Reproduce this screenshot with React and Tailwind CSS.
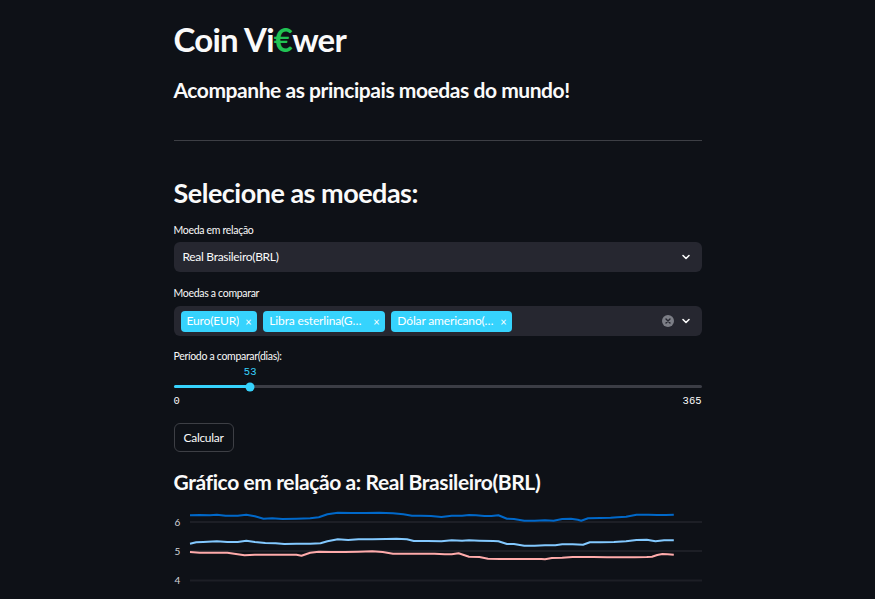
import React from "react";

const DARK = [[72,43],[100,42],[130,43],[150,41],[175,44],[210,44],[235,41],[260,46],[285,53],[310,52],[340,54],[380,53],[420,52],[445,49],[470,40],[500,35],[540,36],[580,36],[620,35],[660,37],[690,40],[715,44],[740,44],[770,45],[800,48],[830,44],[860,44],[880,42],[900,43],[925,45],[945,45],[965,43],[990,53],[1010,54],[1040,59],[1070,59],[1100,58],[1125,59],[1150,54],[1175,53],[1195,56],[1205,59],[1225,52],[1260,51],[1290,50],[1310,49],[1335,47],[1365,41],[1400,41],[1425,42],[1450,42],[1473,41]];
const LIGHT = [[72,128],[90,124],[110,123],[150,121],[180,123],[210,123],[235,119],[260,123],[290,126],[320,127],[345,129],[380,128],[420,128],[450,127],[470,121],[500,115],[530,117],[560,115],[600,115],[640,114],[670,113],[700,115],[720,120],[760,120],[800,121],[830,118],[860,119],[880,118],[910,119],[950,120],[965,121],[990,129],[1010,129],[1040,134],[1070,134],[1100,133],[1130,133],[1150,130],[1180,130],[1210,131],[1230,124],[1260,124],[1300,123],[1335,121],[1365,117],[1395,116],[1420,121],[1445,118],[1473,118]];
const PINK = [[72,153],[100,155],[140,155],[180,155],[200,158],[230,163],[260,161],[300,161],[340,161],[380,161],[395,164],[420,155],[445,152],[480,153],[520,153],[560,152],[600,151],[630,153],[660,158],[700,158],[740,158],[780,158],[810,160],[830,160],[850,157],[880,167],[910,168],[935,173],[970,174],[1010,174],[1050,174],[1090,174],[1100,175],[1120,171],[1150,170],[1180,168],[1210,168],[1240,168],[1280,169],[1320,169],[1360,169],[1395,168],[1410,167],[1425,162],[1440,159],[1455,160],[1473,161]];

const toPts = (arr) =>
  arr.map(([zx, zy]) => `${(16 + (zx - 72) / 2.896).toFixed(1)},${(zy / 3).toFixed(1)}`).join(" ");

const SANS = "font-['Lato','Liberation_Sans',sans-serif]";

function Chevron() {
  return (
    <svg width="10" height="10" viewBox="0 0 10 10" fill="none">
      <path d="M2 3.5 L5 6.5 L8 3.5" stroke="#fafafa" strokeWidth="1.6" strokeLinecap="round" strokeLinejoin="round" />
    </svg>
  );
}

function Tag({ children, w }) {
  return (
    <div className={`flex items-center h-[21px] rounded-[4px] bg-[#36d3fd] pl-[6px] pr-[6px] text-white text-[12px] tracking-[-0.15px] ${w}`}>
      <span className="truncate min-w-0 flex-1">{children}</span>
      <span className="ml-[6px] text-[11px] leading-none">×</span>
    </div>
  );
}

export default function App() {
  const value = 53;
  const pct = (value / 365) * 100;
  return (
    <div className={`w-full h-[599px] overflow-hidden bg-[#0e1117] text-[#fafafa] ${SANS}`}>
      <div className="mx-auto w-[528px] flex flex-col pt-[19px]">
        <h1 className="text-[33px] font-bold leading-[40px] tracking-[-0.75px]">
          Coin Vi<span className="text-[#21c354]">€</span>wer
        </h1>
        <h3 className="mt-[17px] text-[21px] font-bold leading-[28px] tracking-[-0.45px]">Acompanhe as principais moedas do mundo!</h3>
        <div className="mt-[36px] h-px bg-[#3d3f45]" />
        <h2 className="mt-[35px] text-[27px] font-bold leading-[34px] tracking-[-0.5px]">Selecione as moedas:</h2>

        <label className="mt-[13px] text-[10.5px] leading-[14px] tracking-[-0.3px]">Moeda em relação</label>
        <div className="mt-[5px] h-[30px] rounded-[6px] bg-[#262730] flex items-center pl-[9px] pr-[11px] text-[12px] tracking-[-0.3px]">
          <span className="flex-1">Real Brasileiro(BRL)</span>
          <Chevron />
        </div>

        <label className="mt-[14px] text-[10.5px] leading-[14px] tracking-[-0.3px]">Moedas a comparar</label>
        <div className="mt-[6px] h-[30px] rounded-[6px] bg-[#262730] flex items-center pl-[7px] pr-[11px]">
          <div className="flex-1 flex items-center gap-[6px]">
            <Tag w="w-auto">Euro(EUR)</Tag>
            <Tag w="w-[122px]">Libra esterlina(GBP)</Tag>
            <Tag w="w-[121px]">Dólar americano(USD)</Tag>
          </div>
          <div className="w-[12px] h-[12px] rounded-full bg-[#7c7e86] flex items-center justify-center mr-[7px]">
            <svg width="6" height="6" viewBox="0 0 6 6">
              <path d="M1 1 L5 5 M5 1 L1 5" stroke="#262730" strokeWidth="1.4" strokeLinecap="round" />
            </svg>
          </div>
          <Chevron />
        </div>

        <label className="mt-[13px] text-[10.5px] leading-[14px] tracking-[-0.3px]">Período a comparar(dias):</label>
        <div className="mt-[2px] relative h-[14px] font-['Liberation_Mono',monospace] text-[10.5px] leading-[14px] text-[#36d3fd]">
          <span className="absolute -translate-x-1/2" style={{ left: `${pct}%` }}>{value}</span>
        </div>
        <div className="relative h-[15px] flex items-center">
          <div className="w-full h-[3px] rounded-full bg-[#3b3d45]">
            <div className="h-full rounded-full bg-[#36d3fd]" style={{ width: `${pct}%` }} />
          </div>
          <div
            className="absolute top-1/2 w-[9px] h-[9px] rounded-full bg-[#36d3fd] -translate-x-1/2 -translate-y-1/2"
            style={{ left: `${pct}%` }}
          />
        </div>
        <div className="flex justify-between font-['Liberation_Mono',monospace] text-[10.5px] leading-[14px]">
          <span>0</span>
          <span>365</span>
        </div>

        <div className="mt-[15px]">
          <button className="h-[29px] px-[9px] rounded-[6px] border border-[#3d3f45] text-[12px] tracking-[-0.3px] text-[#fafafa] bg-[#0e1117]">
            Calcular
          </button>
        </div>

        <h3 className="mt-[16px] text-[21px] font-bold leading-[28px] tracking-[-0.4px]">Gráfico em relação a: Real Brasileiro(BRL)</h3>

        <svg className="mt-[5px] block" width="528" height="99" viewBox="0 0 528 99">
          <line x1="16" y1="21" x2="528" y2="21" stroke="#2c2e36" strokeWidth="1" />
          <line x1="16" y1="50" x2="528" y2="50" stroke="#2c2e36" strokeWidth="1" />
          <line x1="16" y1="79.5" x2="528" y2="79.5" stroke="#1d1f26" strokeWidth="2" />
          <g fill="#d5d6da" fontSize="10" fontFamily="Lato, sans-serif">
            <text x="0.5" y="24.5">6</text>
            <text x="0.5" y="53.5">5</text>
            <text x="0.5" y="83">4</text>
          </g>
          <polyline points={toPts(DARK)} fill="none" stroke="#0068c9" strokeWidth="2" strokeLinejoin="round" />
          <polyline points={toPts(LIGHT)} fill="none" stroke="#83c9ff" strokeWidth="2" strokeLinejoin="round" />
          <polyline points={toPts(PINK)} fill="none" stroke="#ffabab" strokeWidth="2" strokeLinejoin="round" />
        </svg>
      </div>
    </div>
  );
}
